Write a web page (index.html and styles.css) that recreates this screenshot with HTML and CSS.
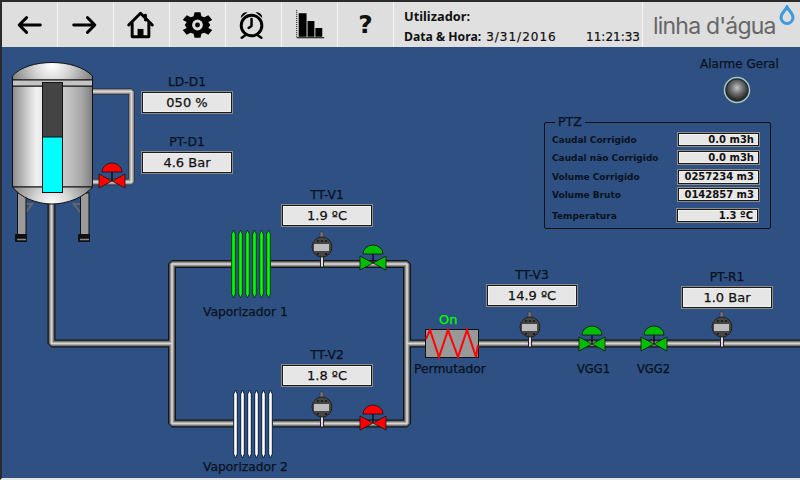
FILE: index.html
```html
<!DOCTYPE html>
<html lang="pt">
<head>
<meta charset="utf-8">
<title>Linha d'água</title>
<link rel="stylesheet" href="styles.css">
</head>
<body>
<div class="app">
  <header class="topbar">
    <button class="tool"><svg class="ico" viewBox="0 0 56 45"><path class="ln" d="M39 23H18M25 15.500 17.500 23 25 30.500"/></svg></button>
    <button class="tool"><svg class="ico" viewBox="0 0 56 45"><path class="ln" d="M16 23H37M30 15.500 37.500 23 30 30.500"/></svg></button>
    <button class="tool"><svg class="ico" viewBox="0 0 56 45"><path class="ln" d="M15 23 27 11 39 23M18.500 21V35H35.500V21M32 13V18"/><path d="M24 27H30V35H24Z"/></svg></button>
    <button class="tool"><svg class="ico" viewBox="0 0 56 45"><g transform="translate(28 23)"><path d="M-3-13H3L4-9 7-8 11-10 15-5 11-3 13 0 11 3 15 5 11 10 7 8 4 9 3 13H-3L-4 9-7 8-11 10-15 5-11 3-13 0-11-3-15-5-11-10-7-8-4-9Z"/><circle r="5.500" class="hole"/><circle r="2.500"/></g></svg></button>
    <button class="tool"><svg class="ico" viewBox="0 0 56 45"><circle cx="26" cy="23.500" r="10.500" class="ln"/><path class="ln thin" d="M26 17V24L23 26M19 34 16 36M33 34 36 36"/><path d="M15 16A6 6 0 0 1 22 10ZM37 16A6 6 0 0 0 30 10Z"/></svg></button>
    <button class="tool"><svg class="ico" viewBox="0 0 56 45"><path d="M15 8V36" class="dots"/><path d="M15 35.500H43V36.500H15ZM17 11H25V35H17ZM26 19H33V35H26ZM34 26H41V35H34Z"/></svg></button>
    <button class="tool tool-q">?</button>
    <div class="status">
      <div class="status-row"><b class="user">Utilizador:</b></div>
      <div class="status-row"><b>Data &amp; Hora:</b><span class="date">3/31/2016</span><span class="time">11:21:33</span></div>
    </div>
    <div class="logo">
      <span class="logo-text">linha d'água</span>
      <svg class="drop" viewBox="0 0 18 20"><path d="M9 2C7 6 3 8 3 12.500A6 6 0 0 0 15 12.500C15 8 11 6 9 2Z"/></svg>
    </div>
  </header>

  <main class="stage">
    <svg class="plant" viewBox="2 47 798 433">
      <defs>
        <path id="pipes" d="M51.500 200V343.500H172M232 264H172V423.500H234M271 264H407V423.500H273M407 343.500H800"/>
        <path id="tankpipes" d="M90 91.500H131.500V182H90"/>
        <g id="valve">
          <path class="stem" d="M0 0V-10"/>
          <path class="vb" d="M-10-9A10 9 0 0 1 10-9Z"/>
          <path class="vb" d="M-13-7 0 0-13 7ZM13-7 0 0 13 7Z"/>
        </g>
        <g id="meter">
          <path class="m-top" d="M-2-15H1L2-9H-2Z"/>
          <rect class="m-stem" x="-1.500" y="9" width="3" height="11"/>
          <circle class="m-body" r="10"/>
          <rect class="m-disp" x="-8" y="-3" width="15" height="7"/>
          <path class="m-dots" d="M-5-6H-3M-1-6H1M3-6H5M-5 7H-3M3 7H5"/>
        </g>
        <path id="tube" d="M.7 4 2.500 0 4.300 4V64L2.500 68 .7 64Z"/>
        <linearGradient id="tankbody">
          <stop offset="0" stop-color="#8c8c8c"/><stop offset=".08" stop-color="#a8a8a8"/>
          <stop offset=".2" stop-color="#d2d2d2"/><stop offset=".3" stop-color="#f2f2f2"/>
          <stop offset=".5" stop-color="#d8d8d8"/><stop offset=".72" stop-color="#c0c0c0"/>
          <stop offset=".88" stop-color="#a4a4a4"/><stop offset="1" stop-color="#7c7c7c"/>
        </linearGradient>
        <radialGradient id="tanktop" gradientUnits="userSpaceOnUse" cx="52" cy="65" r="42">
          <stop offset="0" stop-color="#fff"/><stop offset=".4" stop-color="#d8d8d8"/><stop offset="1" stop-color="#808080"/>
        </radialGradient>
        <radialGradient id="tankbot" gradientUnits="userSpaceOnUse" cx="52" cy="204" r="44">
          <stop offset="0" stop-color="#fff"/><stop offset=".4" stop-color="#d4d4d4"/><stop offset="1" stop-color="#7c7c7c"/>
        </radialGradient>
        <radialGradient id="lampglow" cx=".5" cy=".4" r=".55">
          <stop offset="0" stop-color="#c4c4c4"/><stop offset=".55" stop-color="#6a6a6a"/><stop offset="1" stop-color="#2c2c2c"/>
        </radialGradient>
      </defs>

      <g class="legs">
        <path class="brace" d="M26 212 33 203M26 204 32 204M80 212 73 203M80 204 73 204"/>
        <rect class="leg" x="17.500" y="193" width="8.500" height="42"/>
        <rect class="leg" x="80.500" y="193" width="8.500" height="42"/>
        <path class="foot" d="M15.500 234.500H26.500V241.500H15.500Z"/>
        <path class="foot" d="M78.500 234.500H89.500V241.500H78.500Z"/>
        <path class="foot-hi" d="M17 239.500H26M80 239.500H89"/>
      </g>

      <g class="pipe">
        <use href="#pipes" class="p1"/><use href="#pipes" class="p2"/><use href="#pipes" class="p3"/><use href="#pipes" class="p4"/>
        <use href="#tankpipes" class="q1"/><use href="#tankpipes" class="q2"/><use href="#tankpipes" class="q3"/><use href="#tankpipes" class="q4"/>
      </g>

      <path class="tank" fill="url(#tanktop)" d="M12.500 80V76C20 67 36 62.500 52 62.500S84 67 92.500 76V80Z"/>
      <path class="tank" fill="url(#tankbody)" d="M12.500 86H92.500V187H12.500Z"/>
      <path class="tank" fill="url(#tankbot)" d="M12.500 187C20 197 36 204 52 204S84 197 92.500 187Z"/>
      <path class="tank" fill="#c4c4c4" d="M12.500 80H92.500V86H12.500Z"/>
      <rect class="gauge-empty" x="42.500" y="82.500" width="20" height="55"/>
      <rect class="gauge-fill" x="42.500" y="137" width="20" height="55.500"/>

      <use href="#valve" x="112" y="181" class="red"/>
      <use href="#valve" x="373" y="263" class="green"/>
      <use href="#valve" x="373" y="423" class="red"/>
      <use href="#valve" x="592" y="344" class="green"/>
      <use href="#valve" x="654" y="344" class="green"/>

      <use href="#meter" x="322" y="247"/>
      <use href="#meter" x="322" y="407"/>
      <use href="#meter" x="530" y="327"/>
      <use href="#meter" x="722" y="327"/>

      <g class="tubes-green">
        <use href="#tube" x="231" y="230"/><use href="#tube" x="238" y="230"/><use href="#tube" x="245" y="230"/><use href="#tube" x="252" y="230"/><use href="#tube" x="259" y="230"/><use href="#tube" x="266" y="230"/>
      </g>
      <g class="tubes-white">
        <use href="#tube" x="233" y="390"/><use href="#tube" x="240" y="390"/><use href="#tube" x="247" y="390"/><use href="#tube" x="254" y="390"/><use href="#tube" x="261" y="390"/><use href="#tube" x="268" y="390"/>
      </g>

      <rect class="hx" x="425.500" y="329.500" width="53" height="28"/>
      <path class="hx-coil" d="M426 339 430 330 439 357 448 330 458 357 467 330 476 357 478 345"/>

      <g class="lamp">
        <circle class="lamp-ring" cx="737" cy="90" r="12.500"/>
        <circle class="lamp-dark" cx="737" cy="90" r="10.500"/>
      </g>
    </svg>

    <div class="tag tag-ld"><span>LD-D1</span><output class="val">050 %</output></div>
    <div class="tag tag-pt"><span>PT-D1</span><output class="val">4.6 Bar</output></div>
    <div class="tag tag-v1"><span>TT-V1</span><output class="val">1.9 ºC</output></div>
    <div class="tag tag-v2"><span>TT-V2</span><output class="val">1.8 ºC</output></div>
    <div class="tag tag-v3"><span>TT-V3</span><output class="val">14.9 ºC</output></div>
    <div class="tag tag-r1"><span>PT-R1</span><output class="val">1.0 Bar</output></div>

    <span class="cap cap-vap1">Vaporizador 1</span>
    <span class="cap cap-vap2">Vaporizador 2</span>
    <span class="cap cap-on">On</span>
    <span class="cap cap-perm">Permutador</span>
    <span class="cap cap-vgg1">VGG1</span>
    <span class="cap cap-vgg2">VGG2</span>
    <span class="cap cap-alarm">Alarme Geral</span>

    <fieldset class="ptz">
      <legend>PTZ</legend>
      <div class="row"><span>Caudal Corrigido</span><output class="mini">0.0 m3h</output></div>
      <div class="row"><span>Caudal não Corrigido</span><output class="mini">0.0 m3h</output></div>
      <div class="row row-vol"><span>Volume Corrigido</span><output class="mini tall">0257234 m3</output></div>
      <div class="row"><span>Volume Bruto</span><output class="mini">0142857 m3</output></div>
      <div class="row row-temp"><span>Temperatura</span><output class="mini">1.3 ºC</output></div>
    </fieldset>
  </main>
</div>
</body>
</html>
```
FILE: styles.css
```css
* { box-sizing: border-box; }
html, body { margin: 0; height: 100%; }
body { font-family: "DejaVu Sans", sans-serif; color: #111; overflow: hidden; }
.app {
  width: 800px; height: 480px; display: flex; flex-direction: column;
  border-top: 2px solid #2a2a2a; border-left: 2px solid #2a2a2a;
  border-bottom: 2px solid #e4e4e4; background: #2e5082;
}

/* top bar */
.topbar { height: 45px; flex: none; display: flex; background: #e0e0e0; }
.tool {
  width: 56px; padding: 0; flex: none; border: 0; border-right: 1px solid #f6f6f6;
  background: #dedede; display: flex; align-items: center; justify-content: center;
}
.ico { width: 56px; height: 45px; display: block; }
.ln { fill: none; stroke: #000; stroke-width: 3; stroke-linecap: round; stroke-linejoin: round; }
.thin { stroke-width: 2.500; }
.hole { fill: #dedede; }
.dots { stroke: #000; stroke-width: 1; stroke-dasharray: 1 1; fill: none; }
.tool-q { font: bold 25px "DejaVu Sans", sans-serif; color: #111; }
.status {
  width: 249px; flex: none; padding: 5px 0 0 10px; border-right: 1px solid #f6f6f6;
  font-size: 12.200px; color: #111; display: flex; flex-direction: column; gap: 4px;
  font-family: "Noto Sans", sans-serif;
}
.status-row { display: flex; height: 17px; align-items: center; }
.user { font-size: 12.800px; }
.date { margin-left: 5px; letter-spacing: 1px; font-family: "DejaVu Sans", sans-serif; font-size: 12px; -webkit-text-stroke: .2px; }
.time { margin-left: auto; margin-right: 2px; font-family: "DejaVu Sans", sans-serif; font-size: 12px; -webkit-text-stroke: .2px; }
.logo { flex: 1; position: relative; padding: 9px 0 0 10px; background: #dedede; }
.logo-text { font: 400 23px/30px Inter, sans-serif; color: #666; letter-spacing: -.8px; white-space: nowrap; }
.drop { position: absolute; left: 135px; top: 3px; width: 18px; height: 20px; fill: none; stroke: #3b9bdc; stroke-width: 3; }

/* plant */
.stage { position: relative; flex: 1; }
.plant { position: absolute; left: 0; top: 0; width: 798px; height: 433px; display: block; }

.p1 { fill: none; stroke: #141414; stroke-width: 8; stroke-linejoin: bevel; }
.p2 { fill: none; stroke: #6a6a6a; stroke-width: 5.500; stroke-linejoin: bevel; }
.p3 { fill: none; stroke: #9c9c9c; stroke-width: 3.500; stroke-linejoin: bevel; }
.p4 { fill: none; stroke: #d8d8d8; stroke-width: 1.500; stroke-linejoin: bevel; }
.q1 { fill: none; stroke: #333; stroke-width: 6.500; stroke-linejoin: bevel; }
.q2 { fill: none; stroke: #808080; stroke-width: 5; stroke-linejoin: bevel; }
.q3 { fill: none; stroke: #a8a8a8; stroke-width: 3.500; stroke-linejoin: bevel; }
.q4 { fill: none; stroke: #dcdcdc; stroke-width: 1.500; stroke-linejoin: bevel; }

.tank { stroke: #111; stroke-width: 1; }
.gauge-empty { fill: #444; stroke: #111; stroke-width: 1; }
.gauge-fill { fill: #0ff; stroke: #111; stroke-width: 1; }
.leg { fill: #9a9a9a; stroke: #111; stroke-width: 1; }
.foot { fill: #111; stroke: #111; stroke-width: 1; }
.foot-hi { stroke: #888; stroke-width: 1.500; fill: none; }
.brace { stroke: #666; stroke-width: 2; fill: none; }

.stem { stroke: #111; stroke-width: 1.500; fill: none; }
.vb { stroke: #111; stroke-width: .8; fill: currentColor; }
.red { color: #f00; }
.green { color: #00bd00; }

.m-top { fill: #707070; stroke: #333; stroke-width: .5; }
.m-stem { fill: #ddd; stroke: #222; stroke-width: 1; }
.m-body { fill: #454545; stroke: #222; stroke-width: 1; }
.m-disp { fill: #bdbdbd; }
.m-dots { stroke: #111; stroke-width: 1.500; fill: none; }

.tubes-green use { fill: #0f0; stroke: #0a3a10; stroke-width: 1; }
.tubes-white use { fill: #fff; stroke: #0a1f3a; stroke-width: 1; }

.hx { fill: #999; stroke: #111; stroke-width: 1; }
.hx-coil { fill: none; stroke: #f00; stroke-width: 2; }

.lamp-ring { fill: #1d2f33; stroke: #a9c8c8; stroke-width: 1.500; }
.lamp-dark { fill: url(#lampglow); }

/* tags */
.tag {
  position: absolute; width: 92px; display: flex; flex-direction: column; align-items: center;
  font-size: 12.300px; line-height: 15px; color: #0a1220; -webkit-text-stroke: .25px;
}
.val {
  width: 92px; height: 23px; margin-top: 1px; display: flex; align-items: center; justify-content: center;
  background: #e6e6e6; border: 1px solid #8c8c8c; box-shadow: inset 0 0 0 1px #1a1a1a, inset 0 0 0 2px #f0f0f0;
  font-size: 13px; color: #111;
}
.tag-ld { left: 139px; top: 28px; }
.tag-pt { left: 139px; top: 88px; }
.tag-v1 { left: 279px; top: 141px; }
.tag-v2 { left: 279px; top: 301px; }
.tag-v3 { left: 484px; top: 221px; }
.tag-r1 { left: 679px; top: 223px; }

.cap { position: absolute; font-size: 12.300px; line-height: 15px; color: #0a1220; white-space: nowrap; -webkit-text-stroke: .25px; }
.cap-vap1 { left: 201px; top: 258px; }
.cap-vap2 { left: 201px; top: 413px; }
.cap-on { left: 437px; top: 265px; color: #0f0; font-size: 13px; }
.cap-perm { left: 412px; top: 315px; }
.cap-vgg1 { left: 575px; top: 315px; font-size: 11.500px; }
.cap-vgg2 { left: 635px; top: 315px; font-size: 11.500px; }
.cap-alarm { left: 698px; top: 10px; font-size: 12px; }

/* PTZ */
.ptz {
  position: absolute; left: 542px; top: 68px; width: 227px; height: 114px; margin: 0;
  padding: 3px 10px 0 7px; border: 1px solid #111; border-radius: 2px;
  display: flex; flex-direction: column; gap: 3px;
}
.ptz legend { margin-left: 3px; padding: 0 3px; font-size: 12.500px; line-height: 14px; color: #0a1220; -webkit-text-stroke: .25px; }
.row {
  display: flex; justify-content: space-between; align-items: center; height: 15px;
  font-family: "DejaVu Sans", sans-serif; font-size: 9px; font-weight: bold; color: #0a1220;
}
.row-vol { margin-top: 1px; }
.row-temp { margin-top: 3px; padding-right: 1px; }
.mini {
  width: 83px; height: 15px; padding-right: 5px; text-align: right; font-size: 10px; line-height: 13px; color: #111;
  background: #e6e6e6; border: 1px solid #8c8c8c; box-shadow: inset 0 0 0 1px #1a1a1a, inset 0 0 0 2px #f0f0f0;
}
.tall { height: 16px; }
```
